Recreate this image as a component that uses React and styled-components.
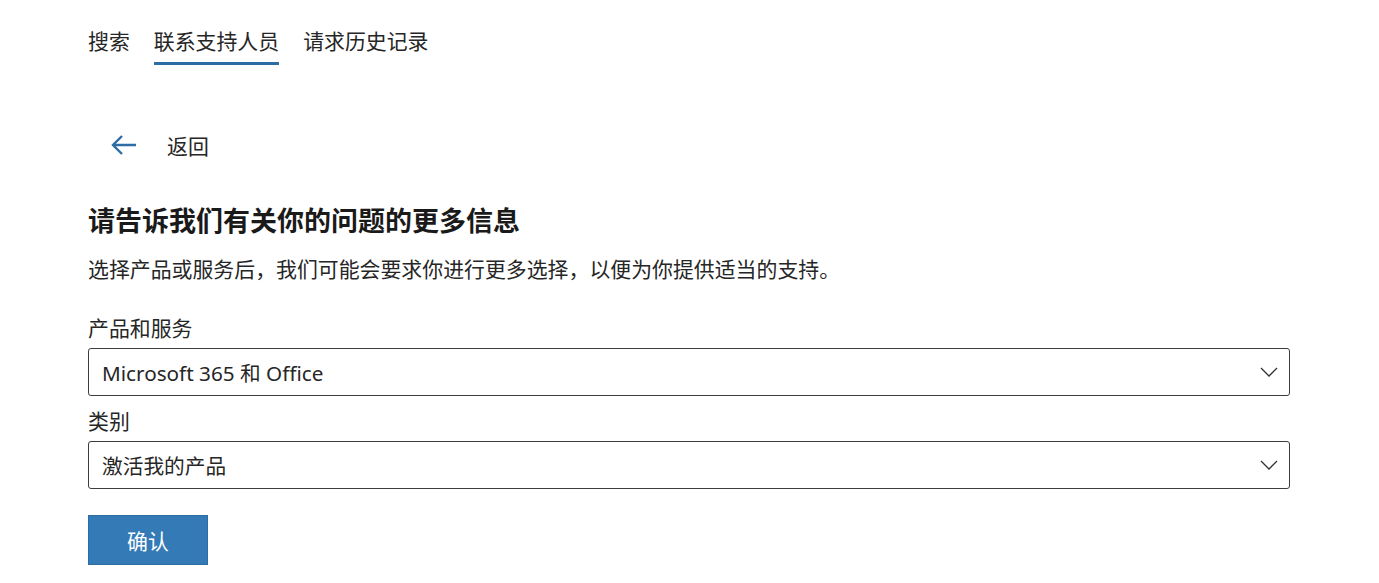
import React from 'react'
import styled, { createGlobalStyle } from 'styled-components'

const GlobalStyle = createGlobalStyle`
  body{
    margin:0;
    background:#fff;
    font-family:"Noto Sans","Noto Sans CJK SC",sans-serif;
    color:#1f1f1f;
  }
`

const Page = styled.div`
  padding:0 0 0 88px;
  width:1202px;
`

const Tabs = styled.nav`
  display:flex;
  gap:24px;
  padding-top:26px;
`

const Tab = styled.a`
  font-size:20.9px;
  line-height:30px;
  color:#262626;
  padding-bottom:6px;
  border-bottom:3px solid ${props => props.active ? '#2e6da4' : 'transparent'};
  cursor:pointer;
`

const Back = styled.div`
  display:flex;
  align-items:center;
  gap:30px;
  margin-top:65px;
  padding-left:23px;
  height:30px;
  font-size:20.9px;
  color:#262626;
`

const Heading = styled.h1`
  margin:43px 0 0;
  font-size:27px;
  line-height:36px;
  font-weight:700;
  color:#1a1a1a;
`

const Lead = styled.p`
  margin:15px 0 0;
  font-size:20.9px;
  line-height:30px;
  color:#262626;
`

const Label = styled.div`
  font-size:20.9px;
  line-height:30px;
  color:#262626;
  margin-top:${props => props.first ? '29px' : '10px'};
  margin-bottom:5px;
`

const Select = styled.div`
  display:flex;
  align-items:center;
  justify-content:space-between;
  height:46px;
  border:1px solid #3c3c3c;
  border-radius:3px;
  padding:0 11px 0 13px;
  font-size:20.7px;
  color:#262626;
`

const Button = styled.button`
  margin-top:26px;
  width:120px;
  height:50px;
  background:#337ab7;
  border:1px solid #2e6da4;
  color:#fff;
  font-family:inherit;
  font-size:20.9px;
  cursor:pointer;
`

const Chevron = () => (
  <svg width="18" height="10" viewBox="0 0 18 10" fill="none">
    <path d="M1 1l8 8 8-8" stroke="#333" strokeWidth="1.3" />
  </svg>
)

const Arrow = () => (
  <svg width="26" height="20" viewBox="0 0 26 20" fill="none">
    <path d="M25 10H2M11 1L2 10l9 9" stroke="#2e6da4" strokeWidth="2.4" />
  </svg>
)

export default function App() {
  return (
    <Page>
      <GlobalStyle />
      <Tabs>
        <Tab>搜索</Tab>
        <Tab active>联系支持人员</Tab>
        <Tab>请求历史记录</Tab>
      </Tabs>
      <Back>
        <Arrow />
        <span>返回</span>
      </Back>
      <Heading>请告诉我们有关你的问题的更多信息</Heading>
      <Lead>选择产品或服务后，我们可能会要求你进行更多选择，以便为你提供适当的支持。</Lead>
      <Label first>产品和服务</Label>
      <Select>
        <span>Microsoft 365 和 Office</span>
        <Chevron />
      </Select>
      <Label>类别</Label>
      <Select>
        <span>激活我的产品</span>
        <Chevron />
      </Select>
      <Button>确认</Button>
    </Page>
  )
}
